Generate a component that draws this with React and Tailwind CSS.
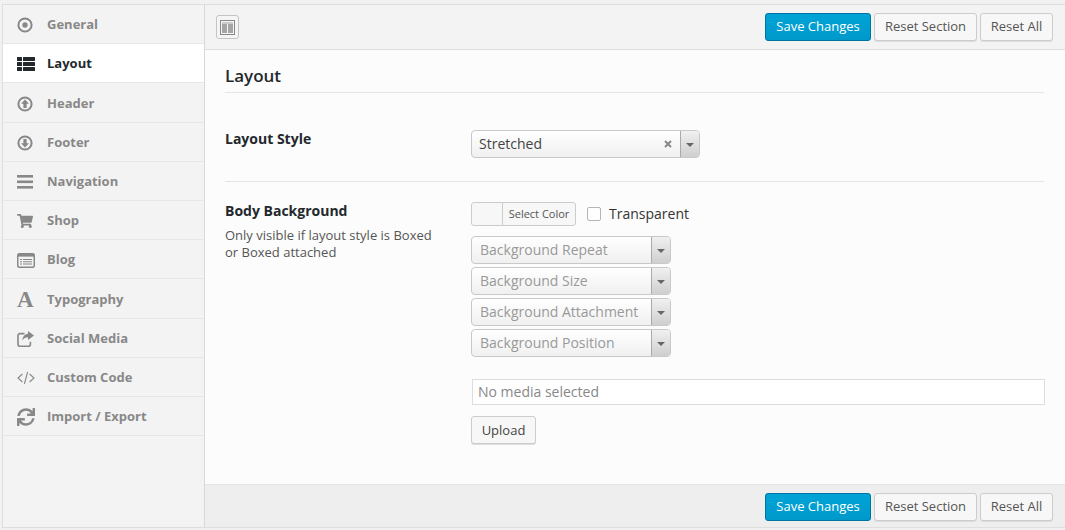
import React from 'react';
import { FaShoppingCart, FaSync } from 'react-icons/fa';

const GeneralIcon = () => (
  <svg width="16" height="16" viewBox="0 0 16 16" className="text-[#888]">
    <circle cx="8" cy="8" r="6.6" fill="none" stroke="currentColor" strokeWidth="2" />
    <circle cx="8" cy="8" r="2.7" fill="currentColor" />
  </svg>
);

const LayoutIcon = () => (
  <svg width="18" height="14" viewBox="0 0 18 14" fill="currentColor">
    <rect x="0" y="0" width="5" height="4" rx="0.5" />
    <rect x="6" y="0" width="12" height="4" rx="0.5" />
    <rect x="0" y="5" width="5" height="4" rx="0.5" />
    <rect x="6" y="5" width="12" height="4" rx="0.5" />
    <rect x="0" y="10" width="5" height="4" rx="0.5" />
    <rect x="6" y="10" width="12" height="4" rx="0.5" />
  </svg>
);

const ArrowCircle = ({ down }) => (
  <svg width="16" height="16" viewBox="0 0 16 16" className={down ? 'rotate-180' : ''}>
    <circle cx="8" cy="8" r="6.6" fill="none" stroke="currentColor" strokeWidth="2" />
    <path d="M8 3.6 L12 7.8 H9.6 V12 H6.4 V7.8 H4 Z" fill="currentColor" />
  </svg>
);

const NavIcon = () => (
  <svg width="16" height="14" viewBox="0 0 16 14" fill="currentColor">
    <rect y="0" width="16" height="2.6" />
    <rect y="5.5" width="16" height="2.6" />
    <rect y="11" width="16" height="2.6" />
  </svg>
);

const BlogIcon = () => (
  <svg width="18" height="15" viewBox="0 0 18 15">
    <rect x="0.75" y="0.75" width="16.5" height="13.5" rx="1.5" fill="#f3f3f3" stroke="currentColor" strokeWidth="1.5" />
    <rect x="1" y="1" width="16" height="2.6" fill="currentColor" />
    <path d="M3 6h2v1H3zM6 6h9v1H6zM3 8.2h2v1H3zM6 8.2h9v1H6zM3 10.4h2v1H3zM6 10.4h9v1H6z" fill="currentColor" />
  </svg>
);

const TypeIcon = () => (
  <span className="font-['Liberation_Serif',serif] text-[23px] font-bold leading-none text-[#888]">A</span>
);

const ShareIcon = () => (
  <svg width="17" height="16" viewBox="0 0 17 16" fill="none">
    <path d="M7.5 2.6H3a2 2 0 0 0-2 2v8.6a2 2 0 0 0 2 2h8.4a2 2 0 0 0 2-2v-2.4" stroke="currentColor" strokeWidth="1.6" />
    <path d="M11 0l6 4.5L11 9V6.3C8.6 6.3 6.6 7 5.4 9.8 5.4 6 7.6 3 11 2.8Z" fill="currentColor" />
  </svg>
);

const CodeIcon = () => (
  <svg width="18" height="14" viewBox="0 0 18 14" fill="none" stroke="currentColor" strokeWidth="1.1">
    <path d="M5.4 3 1 7l4.4 4M12.6 3 17 7l-4.4 4M10.6 1 7.4 13" />
  </svg>
);

const menuItems = [
  { label: 'General', icon: <GeneralIcon /> },
  { label: 'Layout', icon: <LayoutIcon />, active: true },
  { label: 'Header', icon: <ArrowCircle />, tall: true },
  { label: 'Footer', icon: <ArrowCircle down /> },
  { label: 'Navigation', icon: <NavIcon /> },
  { label: 'Shop', icon: <FaShoppingCart size={16} /> },
  { label: 'Blog', icon: <BlogIcon /> },
  { label: 'Typography', icon: <TypeIcon />, tall: true },
  { label: 'Social Media', icon: <ShareIcon /> },
  { label: 'Custom Code', icon: <CodeIcon /> },
  { label: 'Import / Export', icon: <FaSync size={18} /> },
];

const SideItem = ({ label, icon, active, tall }) => (
  <div
    className={`flex items-center border-b border-[#e7e7e7] pl-[14px] pt-[2px] text-[13px] font-bold ${tall ? 'h-[40px]' : 'h-[39px]'} ${
      active ? 'bg-white text-[#23282d]' : 'text-[#888]'
    }`}
  >
    <span className="flex w-[30px] items-center justify-start">{icon}</span>
    <span>{label}</span>
  </div>
);

const ActionButtons = () => (
  <div className="flex items-center gap-[3px]">
    <button className="h-[28px] w-[106px] rounded-[3px] border border-[#0074a2] bg-[#00a0d2] bg-gradient-to-b from-[#00a3d6] to-[#0099cb] text-[13px] text-white">
      Save Changes
    </button>
    <button className="h-[28px] w-[103px] rounded-[3px] border border-[#cccccc] bg-[#f7f7f7] text-[13px] text-[#555] shadow-[0_1px_0_#ddd]">
      Reset Section
    </button>
    <button className="h-[28px] w-[73px] rounded-[3px] border border-[#cccccc] bg-[#f7f7f7] text-[13px] text-[#555] shadow-[0_1px_0_#ddd]">
      Reset All
    </button>
  </div>
);

const DropArrow = () => (
  <span className="flex h-full w-[19px] shrink-0 items-center justify-center border-l border-[#aaa] bg-gradient-to-b from-[#f0f0f0] to-[#cfcfcf]">
    <span className="mt-[1px] h-0 w-0 border-x-[4px] border-t-[4px] border-x-transparent border-t-[#666]" />
  </span>
);

const PlaceholderSelect = ({ label }) => (
  <div className="flex h-[28px] w-[200px] items-center overflow-hidden rounded-[4px] border border-[#c9c9c9] bg-gradient-to-b from-white to-[#f0f0f0]">
    <span className="flex-1 pl-2 text-sm text-[#999]">{label}</span>
    <DropArrow />
  </div>
);

export default function App() {
  return (
    <div className="h-[530px] w-[1065px] overflow-hidden bg-[#f1f1f1] pl-[2px] pt-[4px] font-['Open_Sans',sans-serif] text-[#444]">
      <div className="flex h-[524px] border-y border-l border-[#dedede]">
        {/* Sidebar */}
        <div className="w-[202px] shrink-0 border-r border-[#d8d8d8] bg-[#f3f3f3]">
          {menuItems.map((item) => (
            <SideItem key={item.label} {...item} />
          ))}
        </div>

        {/* Main panel */}
        <div className="flex min-w-0 flex-1 flex-col">
          <div className="flex h-[45px] shrink-0 items-center justify-between border-b border-[#dedede] bg-[#f3f3f3] pl-[11px] pr-[12px]">
            <span className="flex h-[24px] w-[23px] items-center justify-center rounded-[3px] border border-[#c4c4c4] bg-[#f5f5f5]">
              <svg width="15" height="15" viewBox="0 0 15 15">
                <rect x="0.5" y="0.5" width="14" height="14" fill="none" stroke="#888" />
                <rect x="2" y="2" width="11" height="2" fill="#ccc" />
                <rect x="2" y="4" width="5" height="9" fill="#a5a5a5" />
                <rect x="8" y="4" width="5" height="9" fill="#a5a5a5" />
              </svg>
            </span>
            <ActionButtons />
          </div>

          <div className="min-h-0 flex-1 bg-[#fcfcfc] pl-[20px] pr-[21px]">
            <h2 className="border-b border-[#e5e5e5] pb-[4px] pt-[14px] text-[17px] font-semibold leading-[24px] text-[#23282d]">
              Layout
            </h2>

            {/* Layout Style row */}
            <div className="flex h-[89px] border-b border-[#e5e5e5] pt-[37px]">
              <div className="w-[246px] shrink-0 text-sm font-bold leading-[18px] text-[#23282d]">Layout Style</div>
              <div className="flex h-[28px] w-[229px] items-center overflow-hidden rounded-[4px] border border-[#c9c9c9] bg-gradient-to-b from-white to-[#f0f0f0]">
                <span className="flex-1 pl-[7px] text-sm text-[#444]">Stretched</span>
                <svg width="8" height="8" viewBox="0 0 8 8" className="mr-[8px]" stroke="#888" strokeWidth="2">
                  <path d="M1 1l6 6M7 1 1 7" />
                </svg>
                <DropArrow />
              </div>
            </div>

            {/* Body Background row */}
            <div className="flex pt-[20px]">
              <div className="w-[246px] shrink-0">
                <div className="text-sm font-bold leading-[18px] text-[#23282d]">Body Background</div>
                <p className="mt-[7px] text-[13px] leading-[17px] text-[#555]">
                  Only visible if layout style is Boxed
                  <br />
                  or Boxed attached
                </p>
              </div>
              <div className="min-w-0 flex-1">
                <div className="flex h-[24px] items-center">
                  <span className="flex h-[24px] w-[105px] overflow-hidden rounded-[3px] border border-[#ccc] bg-[#f7f7f7]">
                    <span className="w-[31px] border-r border-[#ccc]" />
                    <span className="flex-1 text-center text-[11px] leading-[22px] text-[#555]">Select Color</span>
                  </span>
                  <span className="ml-[11px] h-[14px] w-[14px] rounded-[2px] border border-[#b4b4b4] bg-white" />
                  <span className="ml-[8px] text-sm text-[#333]">Transparent</span>
                </div>
                <div className="mt-[10px] flex flex-col gap-[3px]">
                  <PlaceholderSelect label="Background Repeat" />
                  <PlaceholderSelect label="Background Size" />
                  <PlaceholderSelect label="Background Attachment" />
                  <PlaceholderSelect label="Background Position" />
                </div>
                <div className="-mr-[1px] ml-[1px] mt-[22px] flex h-[26px] items-center border border-[#ddd] bg-white pl-[5px] text-sm text-[#888]">
                  No media selected
                </div>
                <button className="mt-[11px] h-[28px] w-[65px] rounded-[3px] border border-[#ccc] bg-[#f7f7f7] pt-[2px] text-[13px] text-[#444] shadow-[0_1px_0_#ddd]">
                  Upload
                </button>
              </div>
            </div>
          </div>

          <div className="flex h-[43px] shrink-0 items-center justify-end border-t border-[#e5e5e5] bg-[#eeeeee] pr-[12px] pt-[2px]">
            <ActionButtons />
          </div>
        </div>
      </div>
    </div>
  );
}
